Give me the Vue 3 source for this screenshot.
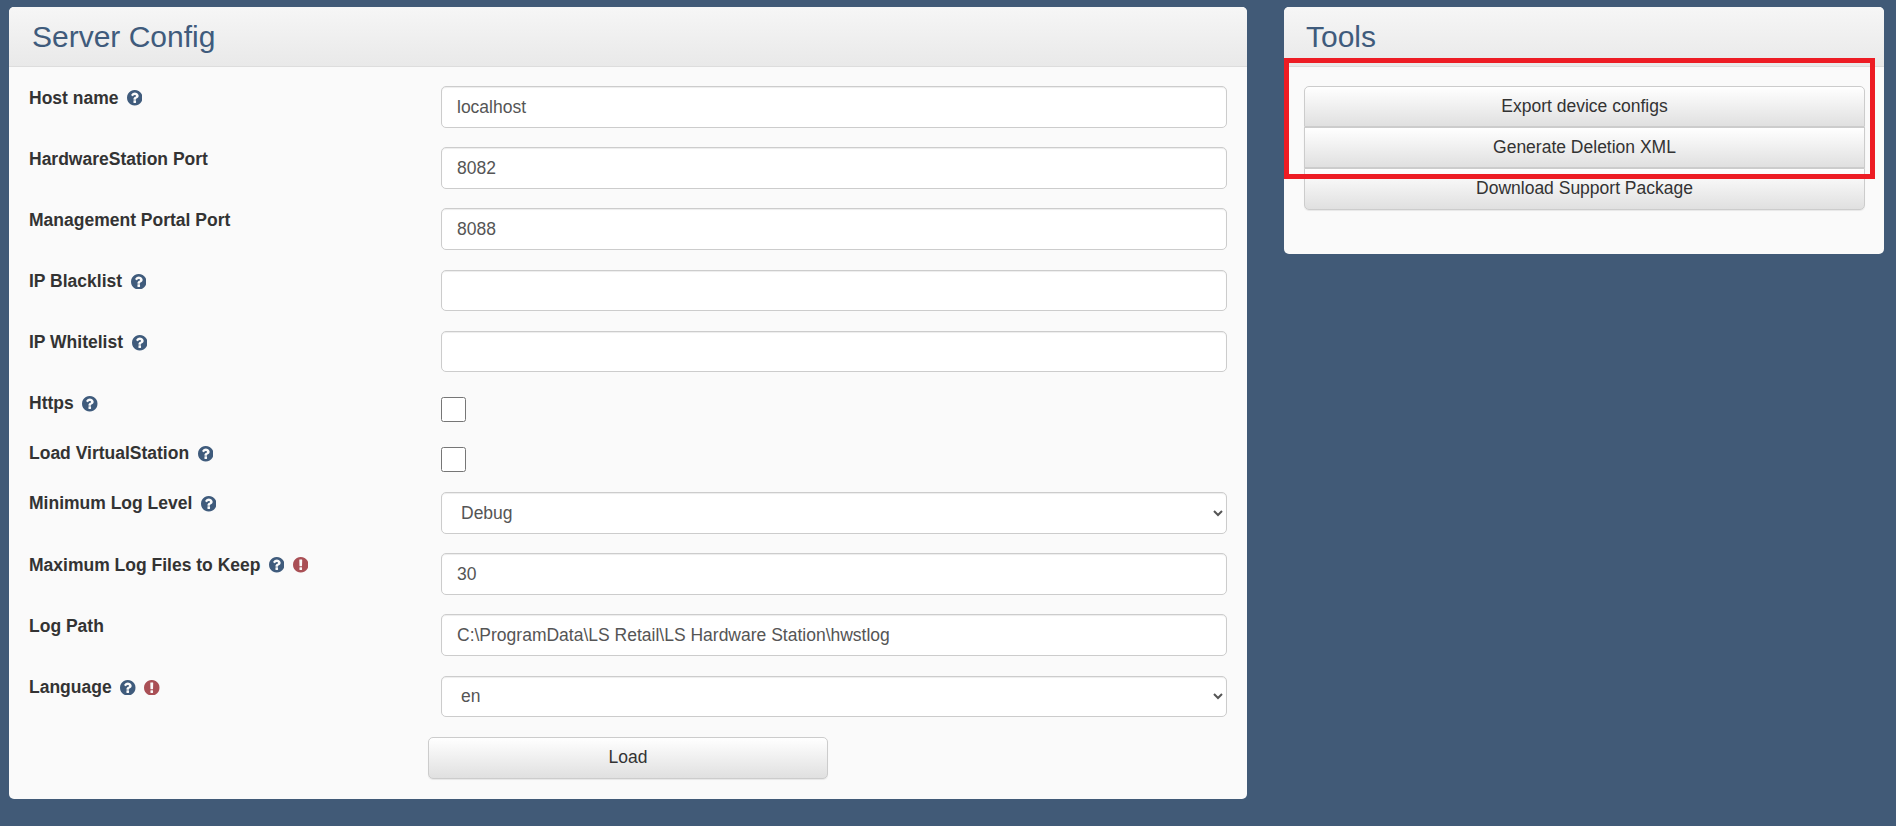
<script setup>
const rows = [
  { label: 'Host name', help: true, type: 'text', value: 'localhost' },
  { label: 'HardwareStation Port', type: 'text', value: '8082' },
  { label: 'Management Portal Port', type: 'text', value: '8088' },
  { label: 'IP Blacklist', help: true, type: 'text', value: '' },
  { label: 'IP Whitelist', help: true, type: 'text', value: '' },
  { label: 'Https', help: true, type: 'check' },
  { label: 'Load VirtualStation', help: true, type: 'check' },
  { label: 'Minimum Log Level', help: true, type: 'select', value: 'Debug' },
  { label: 'Maximum Log Files to Keep', help: true, warn: true, type: 'text', value: '30' },
  { label: 'Log Path', type: 'text', value: 'C:\\ProgramData\\LS Retail\\LS Hardware Station\\hwstlog' },
  { label: 'Language', help: true, warn: true, type: 'select', value: 'en' }
]
const tools = ['Export device configs', 'Generate Deletion XML', 'Download Support Package']
const helpPath = 'M896 1376v-192q0-14-9-23t-23-9h-192q-14 0-23 9t-9 23v192q0 14 9 23t23 9h192q14 0 23-9t9-23zm256-672q0-88-55.5-163t-138.5-116-170-41q-243 0-371 213-15 24 8 42l132 100q7 6 19 6 16 0 25-12 53-68 86-92 34-24 86-24 48 0 85.5 26t37.5 59q0 38-20 61t-68 45q-63 28-115.5 86.5t-52.5 125.5v36q0 14 9 23t23 9h192q14 0 23-9t9-23q0-19 21.5-49.5t54.5-49.5q32-18 49-28.5t46-35 44.5-48 28-60.5 12.5-81zm384 192q0 209-103 385.5t-279.5 279.5-385.5 103-385.5-103-279.5-279.5-103-385.5 103-385.5 279.5-279.5 385.5-103 385.5 103 279.5 279.5 103 385.5z'
const warnPath = 'M768 128q209 0 385.5 103t279.5 279.5 103 385.5-103 385.5-279.5 279.5-385.5 103-385.5-103-279.5-279.5-103-385.5 103-385.5 279.5-279.5 385.5-103zm128 1247v-190q0-14-9-23.5t-22-9.5h-192q-13 0-23 10t-10 23v190q0 13 10 23t23 10h192q13 0 22-9.5t9-23.5zm-2-344l18-621q0-12-10-18-10-8-24-8h-220q-14 0-24 8-10 6-10 18l17 621q0 10 10 17.5t24 7.5h185q14 0 23.5-7.5t10.5-17.5z'
</script>

<template>
  <div class="page">
    <section class="panel config">
      <header class="head"><h3>Server Config</h3></header>
      <div class="body">
        <div v-for="r in rows" :key="r.label" class="row">
          <label class="lbl">
            <span>{{ r.label }}</span>
            <svg v-if="r.help" class="ico help" viewBox="0 128 1536 1536"><path :d="helpPath" /></svg>
            <svg v-if="r.warn" class="ico warn" viewBox="0 128 1536 1536"><path :d="warnPath" /></svg>
          </label>
          <div class="ctl">
            <input v-if="r.type === 'text'" class="field" type="text" :value="r.value" />
            <input v-else-if="r.type === 'check'" class="chk" type="checkbox" />
            <select v-else class="field sel"><option>{{ r.value }}</option></select>
          </div>
        </div>
        <div class="actions"><button class="btn load" type="button">Load</button></div>
      </div>
    </section>
    <section class="panel tools">
      <header class="head"><h3>Tools</h3></header>
      <div class="body tool-body">
        <div class="stack">
          <button v-for="t in tools" :key="t" class="btn tool" type="button">{{ t }}</button>
        </div>
      </div>
      <div class="mark"></div>
    </section>
  </div>
</template>

<style>
html, body { margin: 0; background: #415a77; }
</style>

<style scoped>
.page {
  display: flex;
  align-items: flex-start;
  gap: 37px;
  padding: 7px 12px 28px 9px;
  min-height: 826px;
  box-sizing: border-box;
  background: #415a77;
  font-family: "Liberation Sans", Arial, sans-serif;
  font-size: 17.5px;
  color: #333;
}
.panel {
  position: relative;
  background: #fafafa;
  border-radius: 5px;
  box-sizing: border-box;
}
.config { width: 1238px; flex: none; }
.tools { width: 600px; flex: none; }
.head {
  height: 59.5px;
  box-sizing: border-box;
  border-bottom: 1px solid #ddd;
  border-radius: 5px 5px 0 0;
  background: linear-gradient(#f6f6f6, #e9e9e9);
  padding: 0 23px;
  display: flex;
  align-items: center;
}
.tools .head { padding: 0 22px; }
h3 {
  margin: 0;
  font-size: 30px;
  font-weight: 400;
  color: #3f5b7c;
  line-height: 59px;
}
.body { padding: 19.5px 20px 20.5px 20px; }
.row { display: flex; margin-bottom: 19.6px; }
.row:has(.chk) { margin-bottom: 20px; }
.lbl {
  width: 412px;
  flex: none;
  display: flex;
  align-items: center;
  align-self: flex-start;
  height: 24px;
  font-weight: 700;
  color: #333;
}
.ico { width: 15.5px; height: 15.5px; margin-left: 8.5px; flex: none; }
.ico.warn { margin-left: 8.5px; }
.help path { fill: #3f5b7c; }
.warn path { fill: #a94f55; }
.ctl { flex: 1; min-width: 0; }
.field {
  display: block;
  width: 100%;
  height: 41.6px;
  box-sizing: border-box;
  padding: 8px 15px 7px;
  border: 1px solid #ccc;
  border-radius: 5px;
  background: #fff;
  color: #555;
  font: inherit;
  box-shadow: inset 0 1px 1px rgba(0, 0, 0, .075);
}
.sel { padding: 7px 15px; }
.chk {
  display: block;
  width: 25px;
  height: 25px;
  margin: 5px 0 0;
}
.actions { display: flex; justify-content: center; }
.btn {
  box-sizing: border-box;
  height: 41.2px;
  border: 1px solid #ccc;
  background: linear-gradient(#fff, #e0e0e0);
  color: #333;
  font: inherit;
  padding: 0;
  box-shadow: inset 0 1px 0 rgba(255, 255, 255, .15), 0 1px 1px rgba(0, 0, 0, .075);
}
.load { width: 400px; height: 42px; border-radius: 5px; }
.tool-body { padding: 19.5px 19px 44px 20px; }
.stack { display: flex; flex-direction: column; }
.tool { width: 100%; border-radius: 0; }
.tool:first-child { border-radius: 5px 5px 0 0; }
.tool:last-child { border-radius: 0 0 5px 5px; }
.mark {
  position: absolute;
  left: 0;
  top: 51px;
  width: 591px;
  height: 121px;
  box-sizing: border-box;
  border: 5px solid #ed1c24;
}
</style>
